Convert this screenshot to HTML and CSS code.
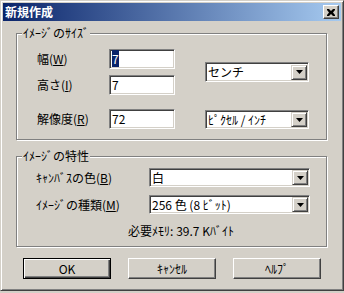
FILE: index.html
```html
<!DOCTYPE html>
<html lang="ja">
  <head>
    <meta charset="UTF-8" />
    <title>新規作成</title>
    <link rel="stylesheet" href="styles.css">
  </head>
  <body>
    <div class="window">
      <div class="titlebar">
        <span class="title">新規作成</span>
        <div class="close-btn">
          <svg width="8" height="7" viewBox="0 0 8 7">
            <path d="M0 0h2l2 2 2-2h2v1L6 3.5 8 6v1H6L4 5 2 7H0V6l2-2.5L0 1z" fill="#000" />
          </svg>
        </div>
      </div>

      <div class="group group-size">
        <span class="group-title">ｲﾒｰｼﾞのｻｲｽﾞ</span>
        <div class="size-grid">
          <label class="lbl row1">幅(<u>W</u>)</label>
          <div class="field row1"><span class="selected">7</span></div>
          <label class="lbl row2">高さ(<u>I</u>)</label>
          <div class="field row2">7</div>
          <div class="combo unit">
            <span class="combo-text">センチ</span>
            <span class="combo-btn"><svg width="7" height="4" viewBox="0 0 7 4"><path d="M0 0h7L3.5 4z" fill="#000" /></svg></span>
          </div>
          <label class="lbl row3">解像度(<u>R</u>)</label>
          <div class="field row3">72</div>
          <div class="combo row3 res-unit">
            <span class="combo-text">ﾋﾟｸｾﾙ / ｲﾝﾁ</span>
            <span class="combo-btn"><svg width="7" height="4" viewBox="0 0 7 4"><path d="M0 0h7L3.5 4z" fill="#000" /></svg></span>
          </div>
        </div>
      </div>

      <div class="group group-props">
        <span class="group-title">ｲﾒｰｼﾞの特性</span>
        <div class="props-grid">
          <label class="lbl">ｷｬﾝﾊﾞｽの色(<u>B</u>)</label>
          <div class="combo">
            <span class="combo-text">白</span>
            <span class="combo-btn"><svg width="7" height="4" viewBox="0 0 7 4"><path d="M0 0h7L3.5 4z" fill="#000" /></svg></span>
          </div>
          <label class="lbl">ｲﾒｰｼﾞの種類(<u>M</u>)</label>
          <div class="combo">
            <span class="combo-text">256 色 (8 ﾋﾞｯﾄ)</span>
            <span class="combo-btn"><svg width="7" height="4" viewBox="0 0 7 4"><path d="M0 0h7L3.5 4z" fill="#000" /></svg></span>
          </div>
        </div>
        <div class="memory">必要ﾒﾓﾘ: 39.7 Kﾊﾞｲﾄ</div>
      </div>

      <div class="buttons">
        <button class="btn default">OK</button>
        <button class="btn">ｷｬﾝｾﾙ</button>
        <button class="btn">ﾍﾙﾌﾟ</button>
      </div>
    </div>
  </body>
</html>
```

FILE: styles.css
```css
body {
  margin: 0;
  background: #d4d0c8;
  font-family: "Noto Sans CJK JP", "Noto Sans", sans-serif;
  font-size: 12px;
  color: #000;
}
.window {
  box-sizing: border-box;
  width: 344px;
  height: 291px;
  padding: 2px;
  background: #d4d0c8;
  border: 1px solid;
  border-color: #d4d0c8 #404040 #404040 #d4d0c8;
  box-shadow: inset 1px 1px #fff, inset -1px -1px #808080;
}
.titlebar {
  display: flex;
  align-items: center;
  justify-content: space-between;
  height: 18px;
  padding: 0 2px;
  background: linear-gradient(to right, #0a246a, #a6caf0);
}
.title {
  color: #fff;
  font-weight: bold;
  line-height: 14px;
}
.close-btn {
  box-sizing: border-box;
  display: flex;
  align-items: center;
  justify-content: center;
  width: 16px;
  height: 14px;
  background: #d4d0c8;
  border: 1px solid;
  border-color: #fff #404040 #404040 #fff;
  box-shadow: inset -1px -1px #808080;
}
.group {
  position: relative;
  box-sizing: border-box;
  width: 311px;
  margin-left: 13px;
  border: 1px solid #808080;
  box-shadow: inset 1px 1px #fff, 1px 1px #fff;
}
.group-title {
  position: absolute;
  top: -8px;
  left: 5px;
  padding: 0 1px;
  line-height: 14px;
  background: #d4d0c8;
}
.group-size {
  margin-top: 12px;
  padding: 15px 0 10px 20px;
}
.group-props {
  margin-top: 16px;
  padding: 11px 0 8px 19px;
}
.lbl {
  display: flex;
  align-items: center;
  line-height: 14px;
}
u {
  text-decoration-thickness: 1px;
  text-underline-offset: 1px;
}
.size-grid {
  display: grid;
  grid-template-columns: 72px 96px 104px;
  grid-template-rows: 20px 20px 28px;
  row-gap: 6px;
}
.row1 { grid-row: 1; }
.row2 { grid-row: 2; }
.row3 { grid-row: 3; align-self: end; height: 20px; }
.field {
  box-sizing: border-box;
  width: 66px;
  height: 20px;
  padding: 1px 2px 0;
  line-height: 16px;
  background: #fff;
  border: 1px solid;
  border-color: #808080 #fff #fff #808080;
  box-shadow: inset 1px 1px #404040, inset -1px -1px #d4d0c8;
}
.selected {
  background: #0a246a;
  color: #fff;
}
.combo {
  box-sizing: border-box;
  display: flex;
  align-items: center;
  justify-content: space-between;
  height: 19px;
  padding: 1px 1px 1px 2px;
  background: #fff;
  border: 1px solid;
  border-color: #808080 #fff #fff #808080;
  box-shadow: inset 1px 1px #404040, inset -1px -1px #d4d0c8;
}
.combo-text {
  line-height: 14px;
}
.combo-btn {
  box-sizing: border-box;
  display: flex;
  align-items: center;
  justify-content: center;
  width: 16px;
  height: 15px;
  background: #d4d0c8;
  border: 1px solid;
  border-color: #d4d0c8 #404040 #404040 #d4d0c8;
  box-shadow: inset 1px 1px #fff, inset -1px -1px #808080;
}
.unit {
  grid-column: 3;
  grid-row: 1 / 3;
  align-self: center;
  height: 20px;
}
.res-unit {
  grid-column: 3;
  height: 19px;
}
.props-grid {
  display: grid;
  grid-template-columns: 113px 161px;
  grid-template-rows: 19px 19px;
  row-gap: 8px;
}
.memory {
  margin-top: 10px;
  text-align: center;
  line-height: 14px;
}
.buttons {
  display: flex;
  justify-content: center;
  gap: 17px;
  margin-top: 11px;
}
.btn {
  box-sizing: border-box;
  width: 88px;
  height: 21px;
  padding: 0;
  font-family: inherit;
  font-size: 12px;
  color: #000;
  background: #d4d0c8;
  border: 1px solid;
  border-color: #fff #404040 #404040 #fff;
  box-shadow: inset -1px -1px #808080;
}
.btn.default {
  border-color: #000;
  box-shadow: inset 1px 1px #fff, inset -1px -1px #404040, inset -2px -2px #808080;
}
```
